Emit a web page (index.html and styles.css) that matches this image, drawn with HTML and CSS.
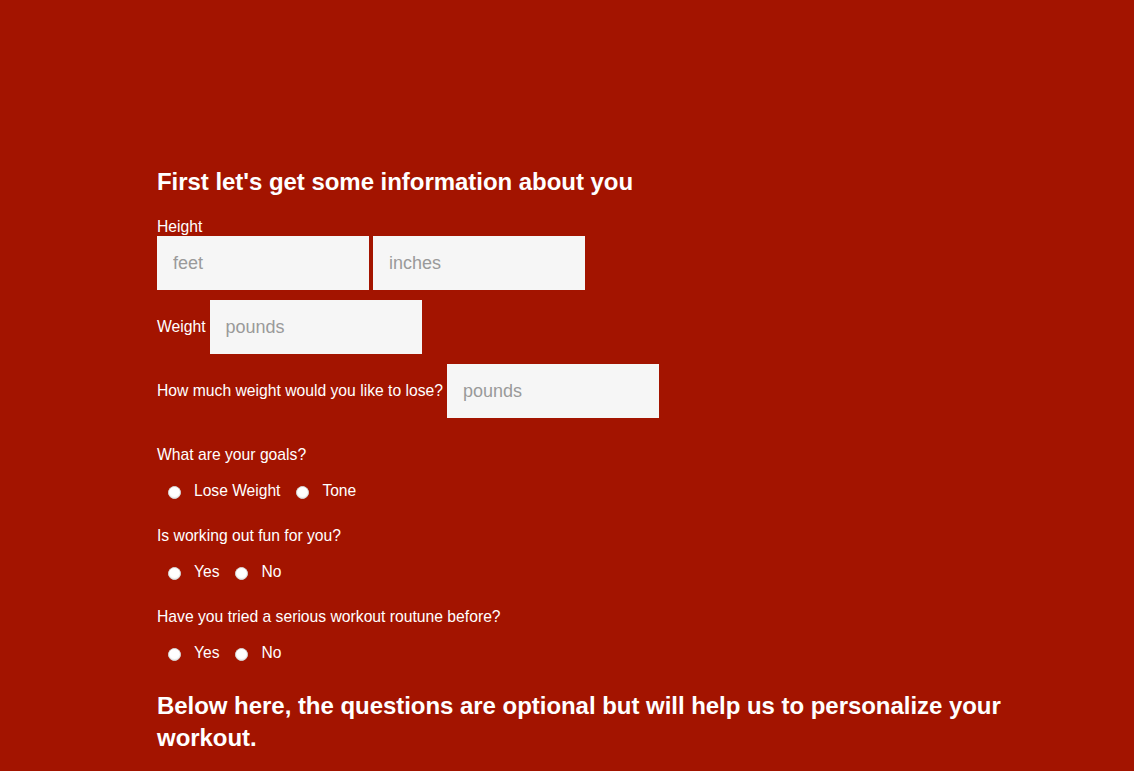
FILE: index.html
```html
<!DOCTYPE html>
<html>
<head>
<meta charset="utf-8">
<link rel="stylesheet" href="styles.css">
</head>
<body>
<main class="page">
  <form class="survey">
    <h2 class="heading">First let's get some information about you</h2>
    <div class="field">
      <label class="label">Height</label>
      <div class="pair">
        <input class="box" type="text" placeholder="feet">
        <input class="box" type="text" placeholder="inches">
      </div>
    </div>
    <div class="inline-field first">
      <label class="label">Weight</label>
      <input class="box" type="text" placeholder="pounds">
    </div>
    <div class="inline-field">
      <label class="label">How much weight would you like to lose?</label>
      <input class="box" type="text" placeholder="pounds">
    </div>

    <div class="question q-first">
      <p class="label">What are your goals?</p>
      <div class="options">
        <label class="option"><input class="radio" type="radio" name="goal"><span>Lose Weight</span></label>
        <label class="option"><input class="radio" type="radio" name="goal"><span>Tone</span></label>
      </div>
    </div>
    <div class="question">
      <p class="label">Is working out fun for you?</p>
      <div class="options">
        <label class="option"><input class="radio" type="radio" name="fun"><span>Yes</span></label>
        <label class="option"><input class="radio" type="radio" name="fun"><span>No</span></label>
      </div>
    </div>
    <div class="question">
      <p class="label">Have you tried a serious workout routune before?</p>
      <div class="options">
        <label class="option"><input class="radio" type="radio" name="tried"><span>Yes</span></label>
        <label class="option"><input class="radio" type="radio" name="tried"><span>No</span></label>
      </div>
    </div>

    <h2 class="heading heading-second">Below here, the questions are optional but will help us to personalize your workout.</h2>
  </form>
</main>
</body>
</html>
```

FILE: styles.css
```css
html, body {
  margin: 0;
  padding: 0;
  background: #a31400;
  min-height: 100%;
}

body {
  font-family: "Liberation Sans", Arial, Helvetica, sans-serif;
  color: #ffffff;
}

.page {
  padding: 166px 0 0 157px;
}

.survey {
  width: 870px;
  display: flex;
  flex-direction: column;
}

.heading {
  margin: 0;
  font-size: 24px;
  line-height: 32px;
  font-weight: bold;
  letter-spacing: -0.04px;
}

.heading-second {
  margin-top: 28px;
}

.label {
  margin: 0;
  font-size: 15.7px;
  line-height: 18px;
}

.field {
  margin-top: 20px;
  display: flex;
  flex-direction: column;
}

.pair {
  display: flex;
  gap: 4px;
}

.box {
  box-sizing: border-box;
  width: 212px;
  height: 54px;
  border: none;
  margin: 0;
  padding: 0 16px;
  background: #f6f6f6;
  font-family: "Liberation Sans", Arial, Helvetica, sans-serif;
  font-size: 18px;
  color: #333;
  outline: none;
}

.box::placeholder {
  color: #9a9a9a;
}

.inline-field {
  display: flex;
  align-items: center;
  gap: 4px;
  margin-top: 10px;
}

.question {
  margin-top: 27px;
  display: flex;
  flex-direction: column;
  gap: 18px;
}

.q-first {
  margin-top: 28px;
}

.options {
  display: flex;
  align-items: center;
  padding-left: 11px;
  gap: 16px;
  height: 18px;
}

.option {
  display: flex;
  align-items: center;
  gap: 13px;
  font-size: 15.6px;
  line-height: 18px;
}

.radio {
  appearance: none;
  -webkit-appearance: none;
  box-sizing: border-box;
  width: 13px;
  height: 13px;
  margin: 2px 0 0 0;
  border-radius: 50%;
  background: #ffffff;
  border: 1px solid #d8d8d8;
  box-shadow: inset 0 -1px 1px rgba(0,0,0,0.08);
}
```
